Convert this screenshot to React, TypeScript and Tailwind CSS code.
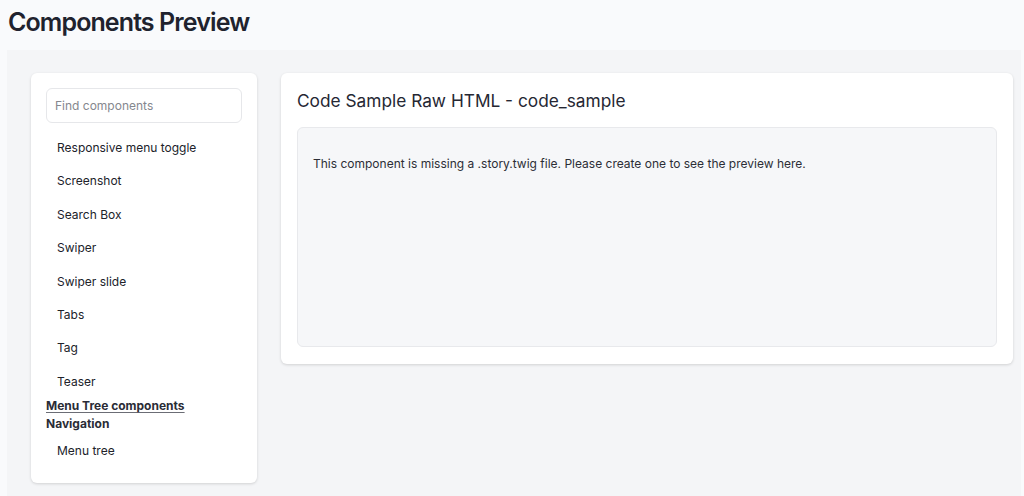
import React from "react";

const items = [
  "Responsive menu toggle",
  "Screenshot",
  "Search Box",
  "Swiper",
  "Swiper slide",
  "Tabs",
  "Tag",
  "Teaser",
];

export default function App() {
  return (
    <div
      className="min-h-screen w-full bg-[#f9fafc] text-[#222630]"
      style={{ fontFamily: "Inter, 'Noto Sans', sans-serif" }}
    >
      <h1 className="px-2 pt-[6px] pb-[12px] text-[25px] leading-[32px] font-semibold tracking-[-0.9px] text-[#20222e]">
        Components Preview
      </h1>
      <div className="ml-[7px] mr-[3px] min-h-[446px] bg-[#f4f5f7] pl-[24px] pr-[8px] pt-[23px] pb-[14px]">
        <div className="flex items-start gap-[24px]">
          <aside className="w-[226px] shrink-0 rounded-md bg-white px-[15px] pt-[15px] pb-[15px] shadow-[0_1px_3px_rgba(0,0,0,0.15)]">
            <input
              type="text"
              placeholder="Find components"
              className="h-[35px] w-full rounded-md border border-[#e6e7ea] px-[8px] text-[12px] text-[#222630] placeholder:text-[#85878e] outline-none"
            />
            <ul className="mt-[8px]">
              {items.map((t) => (
                <li
                  key={t}
                  className="py-2 pl-[11px] text-[12px] leading-[17.4px] text-[#20222a]"
                >
                  {t}
                </li>
              ))}
            </ul>
            <div className="-mt-[1px] text-[12px] leading-[18px] font-bold text-[#2a2c36]">
              <div className="underline decoration-[#6b6d75] underline-offset-2">
                Menu Tree components
              </div>
              <div>Navigation</div>
            </div>
            <ul className="mt-[1px]">
              <li className="py-2 pl-[11px] text-[12px] leading-[17.4px] text-[#20222a]">
                Menu tree
              </li>
            </ul>
          </aside>
          <main className="flex-1 rounded-md bg-white px-[16px] pt-[14px] pb-[17px] shadow-[0_1px_3px_rgba(0,0,0,0.15)]">
            <h2 className="text-[17.3px] leading-[28px] font-normal text-[#252733]">
              Code Sample Raw HTML - code_sample
            </h2>
            <div className="mt-[12px] h-[220px] rounded-md border border-[#e8e9ec] bg-[#f6f7f9] px-[15px] pt-[27px]">
              <p className="text-[12px] leading-[18px] text-[#2c2e36]">
                This component is missing a .story.twig file. Please create one to see the preview here.
              </p>
            </div>
          </main>
        </div>
      </div>
    </div>
  );
}
